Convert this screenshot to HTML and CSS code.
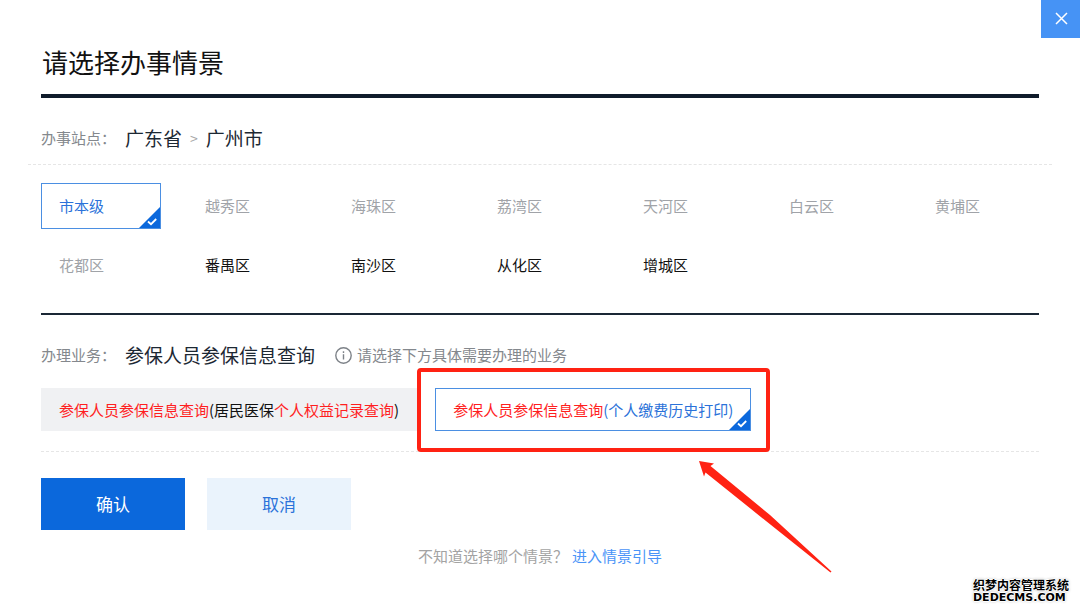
FILE: index.html
```html
<!DOCTYPE html>
<html lang="zh-CN">
<head>
  <meta charset="UTF-8">
  <meta name="viewport" content="width=device-width, initial-scale=1.0">
  <title>请选择办事情景</title>
  <link rel="stylesheet" href="styles.css">
</head>
<body>
  <main class="dialog">
    <button class="close" type="button" aria-label="关闭">
      <svg width="13" height="13" viewBox="0 0 13 13"><path d="M1 1l11 11M12 1L1 12" stroke="#fff" stroke-width="1.5" fill="none"/></svg>
    </button>

    <h1 class="title">请选择办事情景</h1>

    <div class="row site">
      <span class="label">办事站点：</span>
      <span class="value">广东省</span>
      <span class="sep">&gt;</span>
      <span class="value">广州市</span>
    </div>

    <div class="areas">
      <button class="area selected" type="button">市本级<svg class="tick" width="21" height="21" viewBox="0 0 21 21"><path d="M21 0V21H0Z" fill="#0b68dc"/><path d="M9 14.500L12 17.200L17.200 12" stroke="#fff" stroke-width="1.800" fill="none"/></svg></button>
      <button class="area" type="button">越秀区</button>
      <button class="area" type="button">海珠区</button>
      <button class="area" type="button">荔湾区</button>
      <button class="area" type="button">天河区</button>
      <button class="area" type="button">白云区</button>
      <button class="area" type="button">黄埔区</button>
      <button class="area" type="button">花都区</button>
      <button class="area open" type="button">番禺区</button>
      <button class="area open" type="button">南沙区</button>
      <button class="area open" type="button">从化区</button>
      <button class="area open" type="button">增城区</button>
    </div>

    <div class="row business">
      <span class="label">办理业务：</span>
      <span class="value">参保人员参保信息查询</span>
      <span class="tip">
        <svg width="17" height="17" viewBox="0 0 17 17" fill="none" stroke="#7d8288"><circle cx="8.5" cy="8.5" r="7.7" stroke-width="1.4"/><path d="M8.5 7.2v5.3M8.5 4.3v1.6" stroke-width="1.4"/></svg>
        请选择下方具体需要办理的业务
      </span>
    </div>

    <div class="options">
      <button class="option" type="button"><em>参保人员参保信息查询</em>(居民医保<em>个人权益记录查询</em>)</button>
      <div class="marked">
        <button class="option selected" type="button"><em>参保人员参保信息查询</em>(个人缴费历史打印)<svg class="tick" width="21" height="21" viewBox="0 0 21 21"><path d="M21 0V21H0Z" fill="#0b68dc"/><path d="M9 14.500L12 17.200L17.200 12" stroke="#fff" stroke-width="1.800" fill="none"/></svg></button>
        <div class="frame"></div>
        <svg class="arrow" width="134" height="113" viewBox="0 0 134 113"><path d="M0 0L15 2.5L11.5 5L71 54L132.500 110.500L131.500 111.500L67 60L6.500 11.500L5 15.500Z" fill="#ff2213"/></svg>
      </div>
    </div>

    <div class="actions">
      <button class="btn primary" type="button">确认</button>
      <button class="btn" type="button">取消</button>
    </div>

    <p class="guide">不知道选择哪个情景？<a href="#">进入情景引导</a></p>

    <div class="watermark">
      <div class="mark-cn">织梦内容管理系统</div>
      <div class="mark-en">DEDECMS.COM</div>
    </div>
  </main>
</body>
</html>
```

FILE: styles.css
```css
* {
  box-sizing: border-box;
}

body {
  margin: 0;
  background: #fff;
  color: #111;
  font-family: "Noto Sans CJK SC", sans-serif;
  font-size: 15px;
}

button {
  font: inherit;
  border: none;
  background: none;
  cursor: pointer;
  white-space: nowrap;
}

.dialog {
  position: relative;
  min-height: 100vh;
  padding: 44px 41px 0;
}

.close {
  position: absolute;
  top: 0;
  right: 0;
  width: 39px;
  height: 38px;
  padding: 0 0 2px 2px;
  background: #4693f5;
  display: flex;
  align-items: center;
  justify-content: center;
}

.title {
  margin: 0;
  padding: 0 1px 14px;
  border-bottom: 4px solid #0f1c2b;
  font-size: 26px;
  font-weight: 400;
  line-height: 36px;
}

.row {
  display: flex;
  align-items: center;
  line-height: 28px;
}

.label {
  width: 84px;
  color: #84888d;
}

.value {
  font-size: 19px;
  color: #1c2833;
}

.site {
  margin: 0 -13px;
  padding: 26px 13px 12px;
  border-bottom: 1px dashed #e6e6e6;
}

.sep {
  margin: 0 8px;
  font-size: 14px;
  color: #a6a6a6;
}

.areas {
  display: grid;
  grid-template-columns: repeat(7, 1fr);
  gap: 13px 26px;
  padding: 18px 2px 25px 0;
  border-bottom: 2px solid #1a2735;
}

.area {
  height: 46px;
  padding: 0 17px 2px;
  border: 1px solid transparent;
  text-align: left;
  color: #a0a3a8;
}

.area.open {
  color: #111;
}

.business {
  padding: 26px 0 1px;
}

.tip {
  display: flex;
  align-items: center;
  gap: 5px;
  margin-left: 20px;
  color: #84888d;
}

.options {
  display: flex;
  gap: 18px;
  padding: 18px 0 20px;
  border-bottom: 1px dashed #e6e6e6;
}

.option {
  height: 43px;
  padding: 0 17px;
  border: 1px solid #f0f1f3;
  background: #f0f1f3;
  color: #111;
}

.option em {
  font-style: normal;
  color: #ff1f1f;
}

.selected {
  position: relative;
  border-color: #4b8fe2;
  background: #fff;
  color: #2b72d9;
}

/* blue corner with the tick */
.tick {
  position: absolute;
  right: 0;
  bottom: 0;
}

.marked {
  position: relative;
}

.frame {
  position: absolute;
  inset: -20px -19px -21px -18px;
  border: 4px solid #ff2213;
  border-radius: 4px;
  pointer-events: none;
}

.arrow {
  position: absolute;
  top: 73px;
  left: 264px;
  pointer-events: none;
}

.actions {
  display: flex;
  gap: 22px;
  padding-top: 26px;
}

.btn {
  width: 144px;
  height: 52px;
  padding-bottom: 3px;
  background: #eaf3fc;
  color: #2b72d9;
  font-size: 17px;
}

.btn.primary {
  background: #0b68dc;
  color: #fff;
}

.guide {
  margin: 14px 0 0;
  line-height: 24px;
  text-align: center;
  color: #a3a3a3;
}

.guide a {
  margin-left: 4px;
  color: #4a94f7;
  text-decoration: none;
}

.watermark {
  position: absolute;
  right: 11px;
  bottom: 8px;
  color: #000;
  font-weight: 700;
  text-shadow: 1px 0 #fff, -1px 0 #fff, 0 1px #fff, 0 -1px #fff, 0 0 3px #888;
}

.mark-cn {
  font-size: 12px;
  line-height: 14px;
}

.mark-en {
  font-family: "DejaVu Sans", sans-serif;
  font-size: 11px;
  line-height: 12px;
}
```
